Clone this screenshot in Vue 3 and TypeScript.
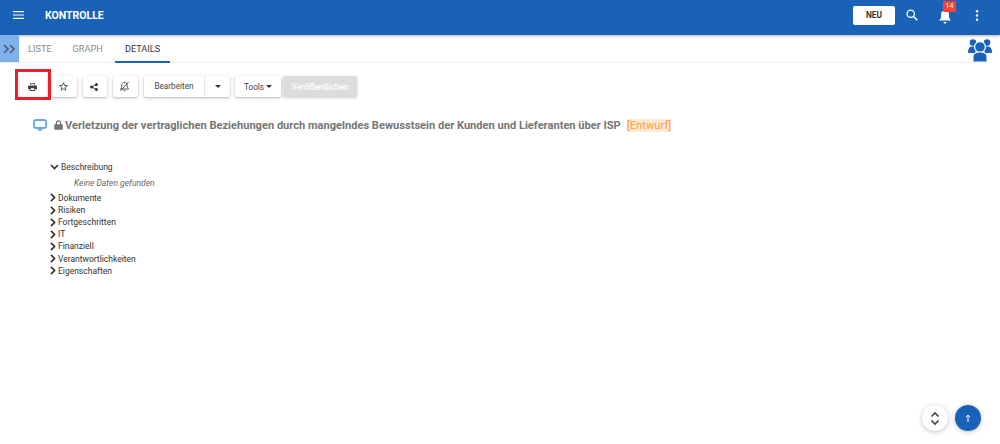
<script setup lang="ts">
const closed: string[] = ['Dokumente', 'Risiken', 'Fortgeschritten', 'IT', 'Finanziell', 'Verantwortlichkeiten', 'Eigenschaften']
</script>

<template>
  <div class="page">
    <header class="topbar">
      <div class="left">
        <svg class="burger" width="11" height="8" viewBox="0 0 11 8"><path d="M0 .7h11M0 4h11M0 7.300h11" stroke="#fff" stroke-width="1.200" /></svg>
        <span class="brand">KONTROLLE</span>
      </div>
      <div class="right">
        <button class="new">NEU</button>
        <svg class="search" width="12" height="12" viewBox="0 0 14 14"><circle cx="5.500" cy="5.500" r="4.300" fill="none" stroke="#fff" stroke-width="1.500" /><path d="M8.500 8.500 13.200 13.200" stroke="#fff" stroke-width="1.800" /></svg>
        <div class="bell">
          <svg width="14" height="16" viewBox="0 0 14 16"><path d="M7 1.500c.7 0 1 .5 1 1 2 .5 3 2 3 4v3.500l1.500 1.800v.7h-11v-.7L3 10V6.500c0-2 1-3.500 3-4 0-.5.300-1 1-1zM5.500 14h3a1.500 1.500 0 0 1-3 0z" fill="#fff" /></svg>
          <span class="count">14</span>
        </div>
        <svg class="more" width="4" height="11" viewBox="0 0 4 11"><circle cx="2" cy="1.300" r="1.250" fill="#fff" /><circle cx="2" cy="5.500" r="1.250" fill="#fff" /><circle cx="2" cy="9.700" r="1.250" fill="#fff" /></svg>
      </div>
    </header>

    <nav class="tabs">
      <div class="toggle">
        <svg width="13" height="10" viewBox="0 0 13 10"><path d="M1 1l4 4-4 4M7 1l4 4-4 4" fill="none" stroke="#4d5a6b" stroke-width="1.600" /></svg>
      </div>
      <span class="tab first">LISTE</span>
      <span class="tab">GRAPH</span>
      <span class="tab active">DETAILS</span>
      <svg class="group" width="24" height="24" viewBox="0 0 24 24" fill="#1a62b8">
        <circle cx="5" cy="3.600" r="3.300" /><circle cx="19" cy="3.600" r="3.300" />
        <path d="M0 13c0-3.500 1.500-5.500 4.500-5.500h5L7 14H1c-.6 0-1-.4-1-1zM24 13c0-3.500-1.500-5.500-4.500-5.500h-5L17 14h6c.6 0 1-.4 1-1z" />
        <circle cx="12" cy="8" r="5.400" stroke="#fff" stroke-width="1.200" />
        <path d="M5 21.500V18c0-3 2.500-5 7-5s7 2 7 5v3.500c0 1-.8 1.500-1.500 1.500h-11C5.800 23 5 22.500 5 21.500z" stroke="#fff" stroke-width="1" />
      </svg>
    </nav>

    <div class="toolbar">
      <button class="btn print">
        <span class="highlight"></span>
        <svg width="9" height="8" viewBox="0 0 10 9"><path d="M2.500 0h5v2.300h-.9V.9H3.400v1.400h-.9zM1 2.800h8c.5 0 1 .4 1 1V7H8v2H2V7H0V3.800c0-.6.500-1 1-1zM3 5.800V8h4V5.800z" fill="#3c4148" /></svg>
      </button>
      <button class="btn icon star">
        <svg width="9" height="9" viewBox="0 0 12 12"><path d="M6 1l1.500 3.400 3.700.4-2.800 2.400.8 3.600L6 8.900l-3.200 1.900.8-3.600L.8 4.800l3.700-.4z" fill="none" stroke="#3c4148" stroke-width="1.200" /></svg>
      </button>
      <button class="btn icon share">
        <svg width="8" height="8" viewBox="0 0 10 10"><circle cx="2" cy="5" r="2" fill="#333" /><circle cx="8" cy="2" r="1.900" fill="#333" /><circle cx="8" cy="8" r="1.900" fill="#333" /><path d="M2 5l6-3M2 5l6 3" stroke="#333" stroke-width="1.100" /></svg>
      </button>
      <button class="btn icon mute">
        <svg width="11" height="11" viewBox="0 0 12 12"><path d="M6 1.500c2 0 3 1.500 3 3.500 0 2 .7 3 1.500 3.800h-9C2.300 8 3 7 3 5c0-2 1-3.500 3-3.500zM5 10.500h2M1.500 11 10.500 1" fill="none" stroke="#444" stroke-width="1" /></svg>
      </button>
      <div class="btn split">
        <span class="split-label">Bearbeiten</span>
        <span class="split-caret"><i class="caret"></i></span>
      </div>
      <button class="btn tools">Tools <i class="caret"></i></button>
      <button class="btn publish">Veröffentlichen</button>
    </div>

    <div class="title-row">
      <svg class="monitor" width="14" height="12" viewBox="0 0 14 12"><rect x="1" y="1" width="12" height="8" rx="1.200" fill="none" stroke="#3a8ee6" stroke-width="1.400" /><path d="M5 11h4" stroke="#3a8ee6" stroke-width="1.400" /></svg>
      <svg class="lock" width="9" height="10" viewBox="0 0 9 10"><path d="M1 4.200h.8V3a2.700 2.700 0 0 1 5.400 0v1.200H8c.5 0 .8.3.8.8v4c0 .5-.3.8-.8.8H1c-.5 0-.8-.3-.8-.8V5c0-.5.300-.8.800-.8zM3 4.200h3V3a1.500 1.500 0 0 0-3 0z" fill="#757575" /></svg>
      <h1 class="title">Verletzung der vertraglichen Beziehungen durch mangelndes Bewusstsein der Kunden und Lieferanten über ISP</h1>
      <span class="draft">[Entwurf]</span>
    </div>

    <section class="tree">
      <div class="open-row">
        <svg width="9" height="6" viewBox="0 0 9 6"><path d="M1 1l3.500 3.500L8 1" fill="none" stroke="#333" stroke-width="1.700" /></svg>
        <span>Beschreibung</span>
      </div>
      <div class="empty">Keine Daten gefunden</div>
      <div v-for="item in closed" :key="item" class="row">
        <svg width="6" height="9" viewBox="0 0 6 9"><path d="M1 .8l3.500 3.700L1 8.200" fill="none" stroke="#333" stroke-width="1.700" /></svg>
        <span>{{ item }}</span>
      </div>
    </section>

    <div class="fabs">
      <button class="fab white">
        <svg width="10" height="15" viewBox="0 0 10 15"><path d="M1.500 5.500 5 2l3.500 3.500M1.500 9.500 5 13l3.500-3.500" fill="none" stroke="#37474f" stroke-width="1.600" /></svg>
      </button>
      <button class="fab blue">
        <svg width="6" height="8" viewBox="0 0 6 8"><path d="M3 8V1.500M1 3l2-2 2 2" fill="none" stroke="#fff" stroke-width="1" /></svg>
      </button>
    </div>
  </div>
</template>

<style>
html, body { margin: 0; background: #fff; }
</style>

<style scoped>
.page { position: relative; width: 1000px; height: 444px; overflow: hidden; background: #fff; font-family: Roboto, "Liberation Sans", sans-serif; color: #333; }
button { font-family: inherit; border: 0; padding: 0; cursor: pointer; }
.topbar { height: 35px; box-sizing: border-box; padding-bottom: 5px; background: #1a62b8; display: flex; align-items: center; justify-content: space-between; box-shadow: 0 1px 3px rgba(0,0,0,.3); position: relative; }
.left { display: flex; align-items: center; padding-left: 13px; }
.brand { margin-left: 21px; color: #fff; font-size: 10.500px; font-weight: 700; }
.right { display: flex; align-items: center; }
.new { width: 42px; height: 19px; background: #fff; color: #333; font-size: 8.300px; font-weight: 700; border-radius: 2px; }
.search { margin-left: 11px; }
.bell { position: relative; margin-left: 20px; height: 16px; margin-top: 2px; }
.count { position: absolute; top: -7px; left: 5px; width: 13px; height: 11px; background: #f44336; color: #fff; font-size: 7px; line-height: 11px; text-align: center; border-radius: 1px; }
.more { margin-left: 23px; margin-right: 21px; }
.tabs { height: 28px; box-sizing: border-box; display: flex; align-items: stretch; position: relative; border-bottom: 1px solid #eee; margin-right: 10px; }
.toggle { width: 19px; background: #7fb2ec; display: flex; align-items: center; justify-content: center; }
.tab { font-size: 9.200px; color: #8a8a8a; line-height: 27px; padding: 0 10px; margin-left: 1px; white-space: nowrap; }
.tab.first { padding-left: 9px; margin-left: 0; }
.tab.active { color: #333; margin-left: 2px; margin-bottom: -1px; border-bottom: 2px solid #1a62b8; }
.group { position: absolute; right: -2px; top: 4px; }
.toolbar { display: flex; align-items: center; margin-top: 13px; padding-left: 20px; height: 21px; }
.btn { height: 21px; background: #fff; border-radius: 2px; box-shadow: 0 1px 3px rgba(0,0,0,.3); font-size: 8.200px; color: #444; display: flex; align-items: center; justify-content: center; }
.print { position: relative; width: 27px; padding-right: 3px; }
.highlight { position: absolute; left: -5px; top: -7px; width: 36px; height: 31px; box-sizing: border-box; border: 3px solid #e8202a; }
.icon { width: 25px; padding-right: 2px; }
.star { margin-left: 5px; }
.share { margin-left: 6px; width: 24px; }
.mute { margin-left: 6px; }
.split { width: 86px; margin-left: 6px; }
.split-label { width: 60px; text-align: center; border-right: 1px solid #e5e5e5; line-height: 21px; }
.split-caret { width: 25px; display: flex; justify-content: center; }
.caret { display: inline-block; border-left: 3px solid transparent; border-right: 3px solid transparent; border-top: 3px solid #333; vertical-align: middle; }
.tools { width: 46px; margin-left: 5px; gap: 2px; }
.publish { width: 74px; margin-left: 2px; background: #dcdcdc; color: #fff; font-size: 8.300px; font-weight: 500; box-shadow: 0 1px 3px rgba(0,0,0,.2); }
.title-row { display: flex; align-items: center; margin-top: 20px; padding-left: 33px; height: 16px; }
.lock { margin-left: 7px; }
.title { margin: 0 0 0 2px; font-size: 11.080px; font-weight: 700; color: #757575; white-space: nowrap; }
.draft { margin-left: 6px; font-size: 11.200px; color: #ff9b3d; background: #ffe9d3; line-height: 13px; }
.tree { margin-top: 28px; padding-left: 50px; font-size: 8.500px; color: #333; }
.open-row { display: flex; align-items: center; gap: 2px; height: 12px; }
.empty { margin: 4px 0 2.800px 24px; font-style: italic; color: #666; height: 12px; line-height: 12px; }
.row { display: flex; align-items: center; gap: 2px; height: 12.150px; }
.fabs { position: absolute; right: 19px; bottom: 13px; display: flex; align-items: center; gap: 7px; }
.fab { width: 26px; height: 26px; border-radius: 50%; display: flex; align-items: center; justify-content: center; box-shadow: 0 1px 5px rgba(0,0,0,.25); }
.white { background: #fff; }
.blue { background: #1a62b8; }
</style>
